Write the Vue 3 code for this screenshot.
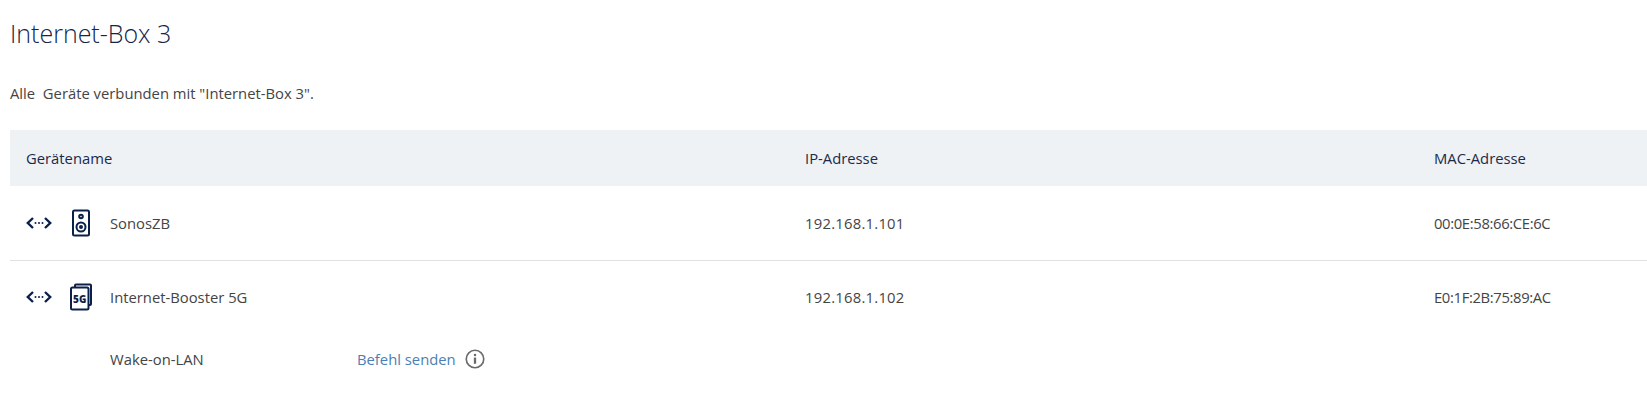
<template>
  <div class="page">
    <h1>Internet-Box 3</h1>
    <p class="intro">Alle&nbsp; Geräte verbunden mit "Internet-Box 3".</p>

    <div class="table">
      <div class="row head">
        <div class="name">Gerätename</div>
        <div>IP-Adresse</div>
        <div>MAC-Adresse</div>
      </div>

      <div class="device first">
        <div class="row">
          <div class="name device-name">
            <svg class="link" width="26" height="14" viewBox="0 0 26 14">
              <path d="M7 2 1.800 7 7 12M19 2l5.200 5L19 12" />
              <circle cx="9.500" cy="7" r="1" />
              <circle cx="13" cy="7" r="1" />
              <circle cx="16.500" cy="7" r="1" />
            </svg>
            <div class="type-slot">
              <svg class="type" width="20" height="28" viewBox="0 0 20 28">
                <rect x="2" y="1.500" width="16" height="25" rx="1.500" />
                <circle cx="10" cy="7.500" r="1.800" />
                <circle cx="10" cy="18" r="4.500" />
                <circle cx="10" cy="18" r="1" />
              </svg>
            </div>
            <span>SonosZB</span>
          </div>
          <div class="ip">192.168.1.101</div>
          <div class="mac">00:0E:58:66:CE:6C</div>
        </div>
      </div>

      <div class="device">
        <div class="row">
          <div class="name device-name">
            <svg class="link" width="26" height="14" viewBox="0 0 26 14">
              <path d="M7 2 1.800 7 7 12M19 2l5.200 5L19 12" />
              <circle cx="9.500" cy="7" r="1" />
              <circle cx="13" cy="7" r="1" />
              <circle cx="16.500" cy="7" r="1" />
            </svg>
            <div class="type-slot">
              <svg class="type" width="24" height="28" viewBox="0 0 24 28">
                <path d="M6 4V2.500C6 1.900 6.400 1.500 7 1.500h14c.6 0 1 .4 1 1V21c0 .6-.4 1-1 1h-1.500" />
                <rect x="2" y="4.500" width="17.500" height="22" rx="1.500" />
                <text x="10.700" y="19.500" text-anchor="middle">5G</text>
              </svg>
            </div>
            <span>Internet-Booster 5G</span>
          </div>
          <div class="ip">192.168.1.102</div>
          <div class="mac">E0:1F:2B:75:89:AC</div>
        </div>
        <div class="wake">
          <span class="wake-label">Wake-on-LAN</span>
          <a class="send">Befehl senden</a>
          <svg class="info" width="20" height="20" viewBox="0 0 21 21">
            <circle cx="10.500" cy="10.500" r="9.200" />
            <circle class="dot" cx="10.500" cy="6.300" r="1.300" />
            <rect class="dot" x="9.300" y="9" width="2.400" height="6.500" />
          </svg>
        </div>
      </div>
    </div>
  </div>
</template>

<script setup>
</script>

<style>
html, body {
  background: #fff;
  overflow: hidden;
}
</style>

<style scoped>
.page {
  padding: 16px 0 0 10px;
  font-family: "Open Sans", "Liberation Sans", sans-serif;
  color: #444;
  font-size: 14.8px;
  width: 1637px;
  height: 387px;
  overflow: hidden;
}

h1 {
  margin: 0;
  font-size: 25px;
  line-height: 34px;
  font-weight: 300;
  color: #13264a;
}

.intro {
  margin: 33px 0 0;
  line-height: 20px;
  font-weight: 400;
}

.table {
  margin-top: 27px;
}

.row {
  display: grid;
  grid-template-columns: 795px 629px 1fr;
  align-items: center;
}

.name {
  padding-left: 16px;
}

.ip {
  letter-spacing: 0.25px;
}

.mac {
  letter-spacing: -0.35px;
}

.head {
  height: 56px;
  background: #eef2f5;
  color: #1c2a4a;
}

.device.first {
  height: 74px;
  border-bottom: 1px solid #dfe1e3;
  display: flex;
  flex-direction: column;
  justify-content: center;
}

.device:not(.first) .row {
  padding-top: 22px;
}

.device-name {
  display: flex;
  align-items: center;
}

.link {
  margin-right: 2px;
}

.link path {
  fill: none;
  stroke: #0b1f4b;
  stroke-width: 2.400;
}

.link circle {
  fill: #0b1f4b;
}

.type-slot {
  width: 54px;
  margin-right: 2px;
  display: flex;
  justify-content: center;
}

.type {
  fill: none;
  stroke: #0b1f4b;
  stroke-width: 2;
}

.type text {
  font-family: "Open Sans", sans-serif;
  font-size: 10px;
  font-weight: 800;
  fill: #0b1f4b;
  stroke: none;
}

.wake {
  display: flex;
  align-items: center;
  margin-top: 38px;
  padding-left: 100px;
}

.wake-label {
  width: 247px;
}

.send {
  color: #4a7fb5;
}

.info {
  margin-left: 9px;
  fill: none;
  stroke: #6a6a6a;
  stroke-width: 1.700;
}

.info .dot {
  fill: #6a6a6a;
  stroke: none;
}
</style>
